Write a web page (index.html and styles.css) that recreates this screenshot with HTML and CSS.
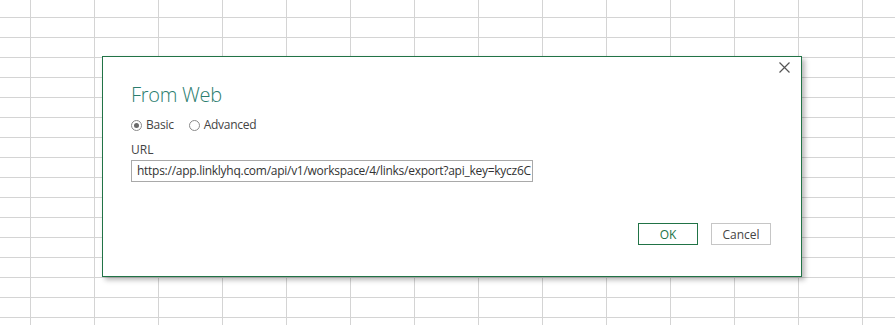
FILE: index.html
```html
<!DOCTYPE html>
<html lang="en">
<head>
<meta charset="utf-8">
<title>From Web</title>
<link rel="stylesheet" href="styles.css">
</head>
<body>
<div class="sheet"></div>
<div class="dialog" role="dialog" aria-label="From Web">
  <button class="close" aria-label="Close">
    <svg width="11" height="11" viewBox="0 0 11 11"><path d="M0.5 0.5 L10.5 10.5 M10.5 0.5 L0.5 10.5" stroke="#555" stroke-width="1.2" fill="none"/></svg>
  </button>
  <h1 class="title">From Web</h1>
  <div class="modes">
    <label class="mode"><span class="radio checked"></span>Basic</label>
    <label class="mode"><span class="radio"></span>Advanced</label>
  </div>
  <div class="field-label">URL</div>
  <div class="url-input">https://app.linklyhq.com/api/v1/workspace/4/links/export?api_key=kycz6C</div>
  <div class="footer">
    <button class="btn btn-primary">OK</button>
    <button class="btn">Cancel</button>
  </div>
</div>
</body>
</html>
```

FILE: styles.css
```css
html, body {
  margin: 0;
  height: 100%;
}
body {
  background-color: #ffffff;
  font-family: "Open Sans", "Noto Sans", "Liberation Sans", sans-serif;
  overflow: hidden;
}
.sheet {
  height: 100%;
  background-image:
    linear-gradient(to right, #d4d4d4 1px, transparent 1px),
    linear-gradient(to bottom, #d4d4d4 1px, transparent 1px);
  background-size: 64px 100%, 100% 20px;
  background-position: 30px 0, 0 17px;
}
.dialog {
  position: absolute;
  left: 102px;
  top: 56px;
  width: 700px;
  height: 221px;
  box-sizing: border-box;
  border: 1px solid #217346;
  background: #ffffff;
  box-shadow: 3px 3px 5px rgba(0, 0, 0, 0.28);
  padding: 24px 30px 31px 28px;
  display: flex;
  flex-direction: column;
  color: #444444;
}
.close {
  position: absolute;
  top: 5px;
  right: 11px;
  width: 11px;
  height: 11px;
  padding: 0;
  border: 0;
  background: none;
  display: block;
}
.close svg {
  display: block;
}
.title {
  margin: 0;
  font-size: 20px;
  font-weight: 300;
  line-height: 28px;
  color: #2b7d6e;
  letter-spacing: -0.3px;
}
.modes {
  margin-top: 8px;
  display: flex;
  gap: 15px;
  font-size: 12px;
  line-height: 16px;
  letter-spacing: -0.25px;
}
.mode {
  display: flex;
  align-items: center;
  gap: 4px;
}
.radio {
  width: 11px;
  height: 11px;
  box-sizing: border-box;
  border: 1px solid #8a8a8a;
  border-radius: 50%;
  display: flex;
  align-items: center;
  justify-content: center;
}
.radio.checked::after {
  content: "";
  width: 5px;
  height: 5px;
  border-radius: 50%;
  background: #6a6a6a;
}
.field-label {
  margin-top: 9px;
  font-size: 12px;
  line-height: 16px;
}
.url-input {
  margin-top: 2px;
  width: 402px;
  height: 22px;
  box-sizing: border-box;
  border: 1px solid #a9a9a9;
  padding: 0 5px;
  font-size: 12px;
  line-height: 20px;
  letter-spacing: -0.27px;
  color: #333333;
  white-space: nowrap;
  overflow: hidden;
}
.footer {
  margin-top: auto;
  display: flex;
  justify-content: flex-end;
  gap: 13px;
}
.btn {
  width: 60px;
  height: 22px;
  box-sizing: border-box;
  border: 1px solid #c6c6c6;
  background: #ffffff;
  font-family: inherit;
  font-size: 12px;
  color: #444444;
  padding: 0;
}
.btn-primary {
  border-color: #217346;
  color: #217346;
}
```
